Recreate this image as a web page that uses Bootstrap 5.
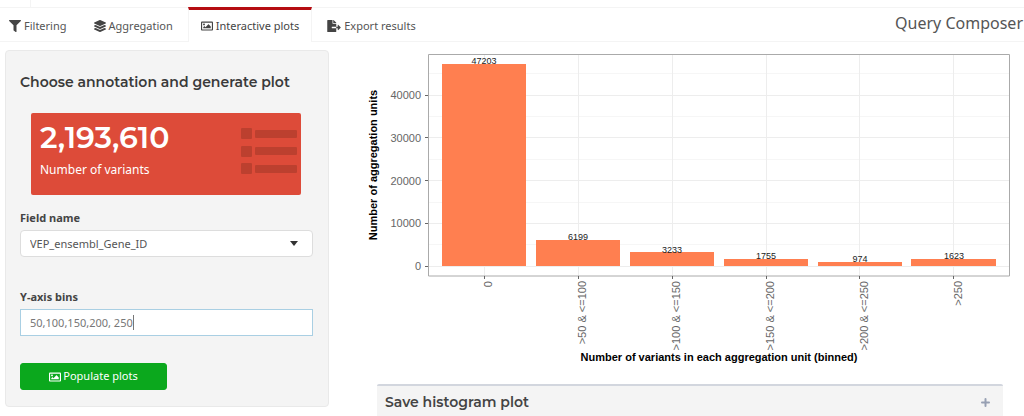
<!DOCTYPE html>
<html lang="en">
<head>
<meta charset="utf-8">
<meta name="viewport" content="width=device-width, initial-scale=1">
<title>Query Composer</title>
<link href="https://cdn.jsdelivr.net/npm/bootstrap@5.3.0/dist/css/bootstrap.min.css" rel="stylesheet">
<style>
  body { font-family: "Noto Sans", sans-serif; font-size: 11px; line-height: 18px; color: #444; background: #fff; }
  .head-font { font-family: Montserrat, Inter, sans-serif; font-weight: 600; }
  .ico { width: 12px; height: 12px; fill: currentColor; flex: none; }
  .ico-wide { width: 14px; }
  .top-strip { height: 7px; }
  .top-strip div { width: 31px; border-right: 1px solid #f4f4f4; }
  .tab-bar { border-top: 1px solid #f4f4f4; border-bottom: 1px solid #f4f4f4; height: 35px; }
  .tab-bar .nav-tabs { --bs-nav-tabs-border-width: 0; gap: 2px; margin-top: -1px; height: 35px; }
  .tab-bar .nav-link { display: flex; align-items: center; gap: 3px; height: 35px; margin: 0; padding: 0 12px; color: #555; border: solid transparent; border-width: 3px 1px 0; border-radius: 0; }
  .tab-bar .nav-link:hover { border-color: transparent; }
  .tab-bar .nav-item:first-child .nav-link { padding-left: 8px; padding-right: 11px; }
  .tab-bar .nav-link.active { color: #444; background: #fff; border-color: #b50d12 #f4f4f4 transparent; }
  .tab-bar .nav-link .ico { color: #444; }
  .page-name { font-size: 16px; line-height: 30px; color: #555; padding-right: 1px; }
  .side-col { flex: 0 0 341px; padding: 0 12px 0 5px; }
  .side-box { background: #f4f4f4; border: 1px solid #e9e9e9; border-radius: 4px; padding: 21px 15px 16px 14px; }
  .side-box h1 { font-size: 14px; line-height: 20px; margin: 0 0 21px; color: #3a3a3a; }
  .value-box { background: #dd4b39; border-radius: 2px; margin: 0 12px 14px 11px; padding: 7px 3px 8px 9px; height: 82px; }
  .value-box .num { font-size: 30px; line-height: 36px; font-weight: 600; }
  .value-box .cap { font-size: 12px; margin-top: 5px; }
  .value-box svg { width: 57px; height: 47px; fill: #bc402f; margin-top: 8px; }
  .form-label { font-weight: 700; margin-bottom: 3px; line-height: 18px; }
  .side-box .form-select, .side-box .form-control { font-size: 11px; line-height: 18px; height: 27px; padding: 3px 9px; color: #555; border: 1px solid #ddd; border-radius: 4px; box-shadow: none; }
  .side-box .form-select { background-image: url("data:image/svg+xml,%3Csvg xmlns='http://www.w3.org/2000/svg' viewBox='0 0 8 5'%3E%3Cpath fill='%23333' d='M0 0h8L4 5z'/%3E%3C/svg%3E"); background-size: 8px 5px; background-position: right 14px center; }
  .side-box .form-control { color: #777; border-color: #a9cfe3; border-radius: 0; }
  .caret { left: 113px; top: 6px; width: 1px; height: 15px; background: #777; }
  .gap-field { margin-bottom: 31px; }
  .btn-go { --bs-btn-color: #fff; --bs-btn-bg: #0ba81d; --bs-btn-border-color: #0ba81d; --bs-btn-hover-color: #fff; --bs-btn-hover-bg: #09931a; width: 147px; height: 27px; padding: 0; font-size: 11px; border-radius: 3px; gap: 2px; margin-top: 27px; }
  .chart { display: block; width: 100%; height: auto; font-family: "Liberation Sans", Arial, sans-serif; font-size: 11px; }
  .chart .major { stroke: #ededed; stroke-width: 1; }
  .chart .minor { stroke: #f6f6f6; stroke-width: 1; }
  .chart .tick { stroke: #666; stroke-width: 1; }
  .chart .axis-num { fill: #666; }
  .chart .bars { fill: #ff7f50; }
  .chart .counts { font-size: 9px; fill: #222; text-anchor: middle; }
  .chart .axis-name { font-weight: 700; fill: #000; text-anchor: middle; }
  .save-box { margin: 10px 21px 0 36px; background: #f4f4f4; border-top: 2px solid #d2d6de; border-radius: 2px 2px 0 0; padding: 4px 13px 4px 8px; }
  .save-box h2 { font-size: 14px; line-height: 24px; margin: 0; color: #444; }
  .save-box button { color: #97a0b3; line-height: 1; }
</style>
</head>
<body>
<div class="top-strip d-flex"><div></div></div>
<header class="tab-bar d-flex justify-content-between">
  <ul class="nav nav-tabs border-0">
    <li class="nav-item"><a class="nav-link" href="#"><svg class="ico" viewBox="0 0 512 512"><path d="M487.976 0H24.028C2.71 0-8.047 25.866 7.058 40.971L192 225.941V432c0 7.831 3.821 15.17 10.237 19.662l80 55.98C298.02 518.69 320 507.493 320 487.98V225.941l184.947-184.97C520.021 25.896 509.338 0 487.976 0z"/></svg>Filtering</a></li>
    <li class="nav-item"><a class="nav-link" href="#"><svg class="ico" viewBox="0 0 512 512"><path d="M12.41 148.02l232.94 105.67c6.8 3.09 14.49 3.09 21.29 0l232.94-105.67c16.55-7.51 16.55-32.52 0-40.03L266.65 2.31a25.607 25.607 0 0 0-21.29 0L12.41 107.98c-16.55 7.51-16.55 32.53 0 40.04zm487.18 88.28l-58.09-26.33-161.64 73.27c-7.56 3.43-15.59 5.17-23.86 5.17s-16.29-1.74-23.86-5.17L70.51 209.97l-58.1 26.33c-16.55 7.5-16.55 32.5 0 40l232.94 105.59c6.8 3.08 14.49 3.08 21.29 0L499.59 276.3c16.55-7.5 16.55-32.5 0-40zm0 127.8l-57.87-26.23-161.86 73.37c-7.56 3.43-15.59 5.17-23.86 5.17s-16.29-1.74-23.86-5.17L70.29 337.87 12.41 364.1c-16.55 7.5-16.55 32.5 0 40l232.94 105.59c6.8 3.08 14.49 3.08 21.29 0L499.59 404.1c16.55-7.5 16.55-32.5 0-40z"/></svg>Aggregation</a></li>
    <li class="nav-item"><a class="nav-link active" aria-current="page" href="#"><svg class="ico" viewBox="0 0 512 512"><path d="M464 64H48C21.49 64 0 85.49 0 112v288c0 26.51 21.49 48 48 48h416c26.51 0 48-21.49 48-48V112c0-26.51-21.49-48-48-48zm-6 336H54a6 6 0 0 1-6-6V118a6 6 0 0 1 6-6h404a6 6 0 0 1 6 6v276a6 6 0 0 1-6 6zM128 152c-22.091 0-40 17.909-40 40s17.909 40 40 40 40-17.909 40-40-17.909-40-40-40zM96 352h320v-80l-87.515-87.515c-4.686-4.686-12.284-4.686-16.971 0L192 304l-39.515-39.515c-4.686-4.686-12.284-4.686-16.971 0L96 304v48z"/></svg>Interactive plots</a></li>
    <li class="nav-item"><a class="nav-link" href="#"><svg class="ico ico-wide" viewBox="0 0 576 512"><path d="M384 121.9c0-6.3-2.5-12.4-7-16.9L279.1 7c-4.5-4.5-10.6-7-17-7H256v128h128zM571 308l-95.7-96.4c-10.1-10.1-27.4-3-27.4 11.3V288h-64v64h64v65.2c0 14.3 17.3 21.4 27.4 11.3L571 332c6.6-6.6 6.6-17.4 0-24zm-379 28v-32c0-8.8 7.2-16 16-16h176V160H248c-13.2 0-24-10.8-24-24V0H24C10.7 0 0 10.7 0 24v464c0 13.3 10.7 24 24 24h336c13.3 0 24-10.7 24-24V352H208c-8.8 0-16-7.2-16-16z"/></svg>Export results</a></li>
  </ul>
  <span class="page-name">Query Composer</span>
</header>

<main class="d-flex pt-2">
  <aside class="side-col">
    <form class="side-box">
      <h1 class="head-font">Choose annotation and generate plot</h1>
      <div class="value-box d-flex justify-content-between text-white">
        <div>
          <div class="num head-font">2,193,610</div>
          <div class="cap">Number of variants</div>
        </div>
        <svg viewBox="0 0 57 47" aria-hidden="true"><rect x="0" y="0" width="11" height="11" rx="1"/><rect x="0" y="18" width="11" height="11" rx="1"/><rect x="0" y="35" width="11" height="11" rx="1"/><rect x="14" y="2" width="42" height="8" rx="1"/><rect x="14" y="19" width="42" height="8" rx="1"/><rect x="14" y="37" width="42" height="8" rx="1"/></svg>
      </div>
      <div class="gap-field">
        <label class="form-label d-block" for="field">Field name</label>
        <select class="form-select" id="field"><option>VEP_ensembl_Gene_ID</option></select>
      </div>
      <div>
        <label class="form-label d-block" for="bins">Y-axis bins</label>
        <div class="position-relative">
          <input class="form-control" id="bins" type="text" value="50,100,150,200, 250">
          <span class="caret position-absolute"></span>
        </div>
      </div>
      <button type="button" class="btn btn-go d-flex align-items-center justify-content-center"><svg class="ico" viewBox="0 0 512 512"><path d="M464 64H48C21.49 64 0 85.49 0 112v288c0 26.51 21.49 48 48 48h416c26.51 0 48-21.49 48-48V112c0-26.51-21.49-48-48-48zm-6 336H54a6 6 0 0 1-6-6V118a6 6 0 0 1 6-6h404a6 6 0 0 1 6 6v276a6 6 0 0 1-6 6zM128 152c-22.091 0-40 17.909-40 40s17.909 40 40 40 40-17.909 40-40-17.909-40-40-40zM96 352h320v-80l-87.515-87.515c-4.686-4.686-12.284-4.686-16.971 0L192 304l-39.515-39.515c-4.686-4.686-12.284-4.686-16.971 0L96 304v48z"/></svg>Populate plots</button>
    </form>
  </aside>

  <section class="flex-grow-1">
    <svg class="chart" viewBox="341 50 683 324" role="img" aria-label="Aggregation units by number of variants">
      <path class="minor" d="M428 73.500h582M428 116.500h582M428 159.500h582M428 202.500h582M428 244.500h582"/>
      <path class="major" d="M428 95.500h582M428 137.500h582M428 180.500h582M428 223.500h582M428 266.500h582M484.500 54v222M578.500 54v222M672.500 54v222M766.500 54v222M859.500 54v222M953.500 54v222"/>
      <g class="bars">
        <rect x="442" y="64" width="84" height="202"/>
        <rect x="536" y="240" width="84" height="26"/>
        <rect x="630" y="252" width="84" height="14"/>
        <rect x="724" y="259" width="84" height="7"/>
        <rect x="818" y="262" width="84" height="4"/>
        <rect x="911" y="259" width="85" height="7"/>
      </g>
      <path d="M428.500 54.500H1009.500V276H428.500Z" fill="none" stroke="#aaa"/>
      <path class="tick" d="M425 95.500h3M425 137.500h3M425 180.500h3M425 223.500h3M425 266.500h3M484.500 276v3M578.500 276v3M672.500 276v3M766.500 276v3M859.500 276v3M953.500 276v3"/>
      <g class="counts">
        <text x="484" y="64">47203</text><text x="578" y="240">6199</text><text x="672" y="253">3233</text><text x="766" y="259">1755</text><text x="860" y="262">974</text><text x="954" y="259">1623</text>
      </g>
      <g class="axis-num" text-anchor="end">
        <text x="421" y="99">40000</text><text x="421" y="142">30000</text><text x="421" y="185">20000</text><text x="421" y="227">10000</text><text x="421" y="270">0</text>
        <text transform="translate(492 281) rotate(-90)">0</text>
        <text transform="translate(586 281) rotate(-90)">&gt;50 &amp; &lt;=100</text>
        <text transform="translate(680 281) rotate(-90)">&gt;100 &amp; &lt;=150</text>
        <text transform="translate(774 281) rotate(-90)">&gt;150 &amp; &lt;=200</text>
        <text transform="translate(868 281) rotate(-90)">&gt;200 &amp; &lt;=250</text>
        <text transform="translate(962 281) rotate(-90)">&gt;250</text>
      </g>
      <g class="axis-name">
        <text x="719" y="361">Number of variants in each aggregation unit (binned)</text>
        <text transform="translate(377 165) rotate(-90)">Number of aggregation units</text>
      </g>
    </svg>
    <div class="save-box d-flex justify-content-between align-items-center">
      <h2 class="head-font">Save histogram plot</h2>
      <button type="button" class="btn p-0 border-0 d-flex" aria-label="Expand"><svg width="9" height="9" viewBox="0 0 9 9"><path d="M4.500 1v7M1 4.500h7" stroke="currentColor" stroke-width="2" stroke-linecap="round"/></svg></button>
    </div>
  </section>
</main>
<script src="https://cdn.jsdelivr.net/npm/bootstrap@5.3.0/dist/js/bootstrap.bundle.min.js"></script>
</body>
</html>
